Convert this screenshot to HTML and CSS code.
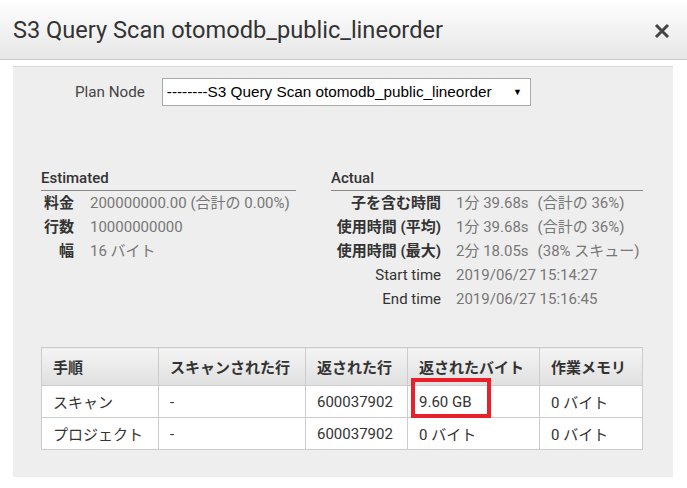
FILE: index.html
```html
<!DOCTYPE html>
<html lang="ja">
<head>
    <meta charset="UTF-8">
    <meta name="viewport" content="width=device-width, initial-scale=1.0">
    <title>S3 Query Scan otomodb_public_lineorder</title>
    <link rel="stylesheet" href="styles.css">
</head>
<body>
    <div class="modal-header">
        <h1>S3 Query Scan otomodb_public_lineorder</h1>
        <svg class="close" width="16" height="16" viewBox="0 0 16 16">
            <path d="M2 2 L14 14 M14 2 L2 14" stroke="#444" stroke-width="3" fill="none"/>
        </svg>
    </div>

    <div class="modal-body">
        <div class="plan-node">
            <label for="planNode">Plan Node</label>
            <div class="select" id="planNode">
                <span>--------S3 Query Scan otomodb_public_lineorder</span>
                <span class="arrow">&#x25BC;</span>
            </div>
        </div>

        <div class="stats">
            <div class="stat-block estimated">
                <h2>Estimated</h2>
                <div class="stat-grid">
                    <div class="key">料金</div>
                    <div class="val">200000000.00 (合計の 0.00%)</div>
                    <div class="key">行数</div>
                    <div class="val">10000000000</div>
                    <div class="key">幅</div>
                    <div class="val">16 バイト</div>
                </div>
            </div>
            <div class="stat-block actual">
                <h2>Actual</h2>
                <div class="stat-grid">
                    <div class="key">子を含む時間</div>
                    <div class="val">1分 39.68s<span class="note">(合計の 36%)</span></div>
                    <div class="key">使用時間 (平均)</div>
                    <div class="val">1分 39.68s<span class="note">(合計の 36%)</span></div>
                    <div class="key">使用時間 (最大)</div>
                    <div class="val">2分 18.05s<span class="note">(38% スキュー)</span></div>
                    <div class="key light">Start time</div>
                    <div class="val">2019/06/27 15:14:27</div>
                    <div class="key light">End time</div>
                    <div class="val">2019/06/27 15:16:45</div>
                </div>
            </div>
        </div>

        <table class="steps">
            <tr>
                <th class="c1">手順</th>
                <th class="c2">スキャンされた行</th>
                <th class="c3">返された行</th>
                <th class="c4">返されたバイト</th>
                <th class="c5">作業メモリ</th>
            </tr>
            <tr>
                <td>スキャン</td>
                <td>-</td>
                <td>600037902</td>
                <td class="marked">9.60 GB<span class="highlight"></span></td>
                <td>0 バイト</td>
            </tr>
            <tr>
                <td>プロジェクト</td>
                <td>-</td>
                <td>600037902</td>
                <td>0 バイト</td>
                <td>0 バイト</td>
            </tr>
        </table>
    </div>
</body>
</html>
```

FILE: styles.css
```css
body {
    margin: 0;
    font-family: Roboto, "Noto Sans CJK JP", sans-serif;
    color: #333;
    background: #fff;
}
.modal-header {
    height: 60px;
    box-sizing: border-box;
    padding: 0 17px 0 13px;
    display: flex;
    align-items: center;
    justify-content: space-between;
    background: linear-gradient(#ffffff, #e6e6e6);
    border-bottom: 1px solid #c8c8c8;
}
.modal-header h1 {
    margin: 0;
    font-size: 23.6px;
    font-weight: 400;
    color: #333;
}
.close {
    display: block;
    margin-top: 2px;
}
.modal-body {
    margin: 6px 14px 10px 13px;
    height: 411px;
    box-sizing: border-box;
    background: #eee;
    border-top: 1px solid #d8d8d8;
    padding: 11px 30px 0 28px;
}
.plan-node {
    display: flex;
    align-items: center;
    padding-left: 34px;
}
.plan-node label {
    font-size: 15.2px;
    color: #444;
    margin-right: 17px;
}
.select {
    width: 369px;
    height: 28px;
    box-sizing: border-box;
    border: 1px solid #aaa;
    background: #fff;
    display: flex;
    align-items: center;
    justify-content: space-between;
    padding: 0 8px 0 4px;
    font-family: "Liberation Sans", Arial, sans-serif;
    font-size: 15.3px;
    color: #000;
}
.select .arrow {
    font-size: 9px;
}
.stats {
    display: flex;
    gap: 35px;
    margin-top: 63px;
}
.stat-block h2 {
    margin: 0;
    font-size: 15px;
    font-weight: 500;
    color: #333;
    line-height: 18px;
    border-bottom: 1px solid #888;
    padding-bottom: 3px;
}
.estimated {
    width: 255px;
}
.actual {
    width: 312px;
}
.stat-grid {
    display: grid;
    grid-template-columns: auto 1fr;
    column-gap: 16px;
    font-size: 15px;
    line-height: 24px;
}
.estimated .stat-grid {
    grid-template-columns: 33px 1fr;
}
.actual .stat-grid {
    grid-template-columns: 110px 1fr;
    column-gap: 15px;
}
.key {
    text-align: right;
    font-weight: 700;
    color: #333;
    white-space: nowrap;
}
.key.light {
    font-weight: 400;
}
.val {
    color: #777;
    white-space: nowrap;
}
.note {
    margin-left: 9px;
}
.steps {
    border-collapse: collapse;
    margin-top: 36px;
    background: #fff;
    font-size: 15px;
}
.steps th, .steps td {
    border: 1px solid #ccc;
    padding: 0 11px;
    text-align: left;
    white-space: nowrap;
}
.steps th {
    height: 37px;
    font-weight: 700;
    background: linear-gradient(#f4f4f4, #e0e0e0);
}
.steps td {
    height: 31px;
    color: #333;
}
.c1 { width: 94px; }
.c2 { width: 124px; }
.c3 { width: 79px; }
.c4 { width: 109px; }
.c5 { width: 80px; }
.marked {
    position: relative;
}
.highlight {
    position: absolute;
    left: 3px;
    top: -8px;
    width: 80px;
    height: 40px;
    box-sizing: border-box;
    border: 4px solid #e8202a;
}
```
